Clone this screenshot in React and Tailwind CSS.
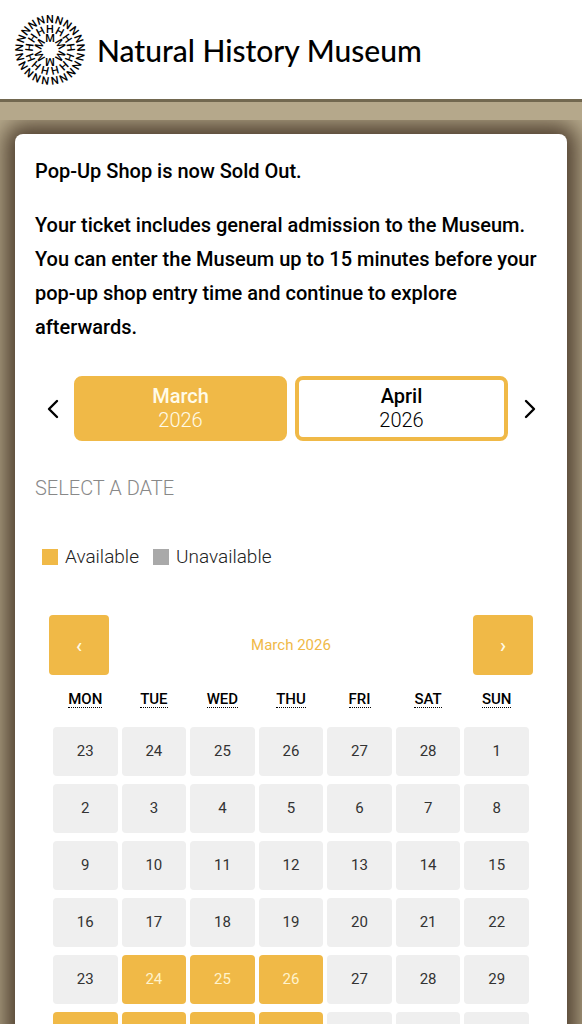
import { useState } from "react";
import clsx from "clsx";

const LOGO_RINGS = [
  { letter: "N", count: 21, radius: 31 },
  { letter: "H", count: 13, radius: 21 },
  { letter: "M", count: 6, radius: 12 },
];

const WEEKDAYS = [
  { short: "MON", full: "Monday" },
  { short: "TUE", full: "Tuesday" },
  { short: "WED", full: "Wednesday" },
  { short: "THU", full: "Thursday" },
  { short: "FRI", full: "Friday" },
  { short: "SAT", full: "Saturday" },
  { short: "SUN", full: "Sunday" },
];

const WEEKS = [
  [23, 24, 25, 26, 27, 28, 1],
  [2, 3, 4, 5, 6, 7, 8],
  [9, 10, 11, 12, 13, 14, 15],
  [16, 17, 18, 19, 20, 21, 22],
  [23, 24, 25, 26, 27, 28, 29],
  [30, 31, 1, 2, 3, 4, 5],
];

// "week-day" positions that can still be booked
const AVAILABLE = ["4-1", "4-2", "4-3", "5-0", "5-1", "5-2", "5-3"];

const MONTHS = ["March", "April"];

const LogoMark = () => (
  <svg className="size-[72px] overflow-visible" viewBox="0 0 72 72" aria-hidden="true">
    {LOGO_RINGS.map(({ letter, count, radius }) =>
      Array.from({ length: count }, (_, i) => (
        <text
          key={`${letter}${i}`}
          x="36"
          y={36 - radius + 4}
          textAnchor="middle"
          transform={`rotate(${(360 / count) * i} 36 36)`}
          className="fill-black font-['Roboto',sans-serif] text-[11px] font-medium"
        >
          {letter}
        </text>
      ))
    )}
  </svg>
);

const Header = () => (
  <header className="border-b-3 border-[#726850] bg-white">
    <a href="#" className="flex items-center gap-[11px] px-[14px] pt-[14px] pb-[13px]">
      <LogoMark />
      <span className="font-['Lato',sans-serif] text-[30px] leading-9 font-medium text-black">
        Natural History Museum
      </span>
    </a>
  </header>
);

const Arrow = ({ points }) => (
  <svg
    className="h-5 w-3"
    viewBox="0 0 12 20"
    fill="none"
    stroke="currentColor"
    strokeWidth="2.4"
    strokeLinecap="round"
    strokeLinejoin="round"
    aria-hidden="true"
  >
    <polyline points={points} />
  </svg>
);

const MonthPicker = ({ selected, onSelect }) => (
  <div className="mt-8 flex items-center gap-2">
    <button type="button" aria-label="Earlier months" className="flex w-[31px] justify-center pl-1">
      <Arrow points="10,2 2,10 10,18" />
    </button>
    {MONTHS.map((month) => (
      <button
        key={month}
        type="button"
        onClick={() => onSelect(month)}
        className={clsx(
          "h-[65px] flex-1 rounded-lg border-4 border-[#f0b947] pb-[2px] text-xl leading-6",
          month === selected ? "bg-[#f0b947] text-[#fffbe8]" : "bg-white text-black"
        )}
      >
        <span className="block font-medium">{month}</span>
        <span className="block font-light">2026</span>
      </button>
    ))}
    <button type="button" aria-label="Later months" className="flex w-[31px] justify-center pr-1">
      <Arrow points="2,2 10,10 2,18" />
    </button>
  </div>
);

const Legend = () => (
  <ul className="mt-[39px] flex gap-[14px] px-[7px] text-[19px] leading-[30px] font-light text-[#222]">
    <li className="flex items-center gap-[7px]">
      <span className="size-4 bg-[#f0b947]" />
      Available
    </li>
    <li className="flex items-center gap-[7px]">
      <span className="size-4 bg-[#a9a9a9]" />
      Unavailable
    </li>
  </ul>
);

const Calendar = () => (
  <div className="mx-[14px] mt-[43px]">
    <div className="flex items-center justify-between">
      <button
        type="button"
        aria-label="Previous month"
        className="size-[60px] rounded-[4px] bg-[#f0b947] text-xl font-medium text-[#fffbe8]"
      >
        ‹
      </button>
      <h3 className="text-[15px] text-[#f0b947]">March 2026</h3>
      <button
        type="button"
        aria-label="Next month"
        className="size-[60px] rounded-[4px] bg-[#f0b947] text-xl font-medium text-[#fffbe8]"
      >
        ›
      </button>
    </div>
    <table className="w-full table-fixed border-separate border-spacing-x-1 border-spacing-y-2">
      <thead>
        <tr>
          {WEEKDAYS.map(({ short, full }) => (
            <th key={short} scope="col" className="h-9 p-0 pb-1 text-[15px] leading-4 font-medium text-black">
              <abbr title={full} className="inline-block border-b border-dotted border-black no-underline">
                {short}
              </abbr>
            </th>
          ))}
        </tr>
      </thead>
      <tbody>
        {WEEKS.map((week, w) => (
          <tr key={w}>
            {week.map((day, d) => {
              const available = AVAILABLE.includes(`${w}-${d}`);
              return (
                <td key={d} className="p-0">
                  <button
                    type="button"
                    disabled={!available}
                    className={clsx(
                      "block h-[49px] w-full rounded-[4px] text-[15px]",
                      available ? "bg-[#f0b947] text-[#fff3cc]" : "bg-[#efefef] text-[#333]"
                    )}
                  >
                    {day}
                  </button>
                </td>
              );
            })}
          </tr>
        ))}
      </tbody>
    </table>
  </div>
);

export default function App() {
  const [month, setMonth] = useState("March");

  return (
    <div className="h-screen overflow-x-hidden overflow-y-auto bg-[#b5a88b] font-['Roboto',sans-serif] [scrollbar-width:none]">
      <Header />
      {/* The card's glow is cut off below this strip */}
      <div className="h-[18px]" />
      <main className="overflow-hidden px-[15px] pt-[14px] pb-5">
        <section className="rounded-lg bg-white p-5 shadow-[0_0_22px_10px_#504030]">
          <div className="space-y-5 text-xl leading-[34px] font-medium text-black">
            <p>Pop-Up Shop is now Sold Out.</p>
            <p>
              Your ticket includes general admission to the Museum. You can enter the Museum up to
              15 minutes before your pop-up shop entry time and continue to explore afterwards.
            </p>
          </div>
          <MonthPicker selected={month} onSelect={setMonth} />
          <h2 className="mt-8 text-xl leading-[30px] font-light text-[#888]">SELECT A DATE</h2>
          <Legend />
          <Calendar />
        </section>
      </main>
    </div>
  );
}
